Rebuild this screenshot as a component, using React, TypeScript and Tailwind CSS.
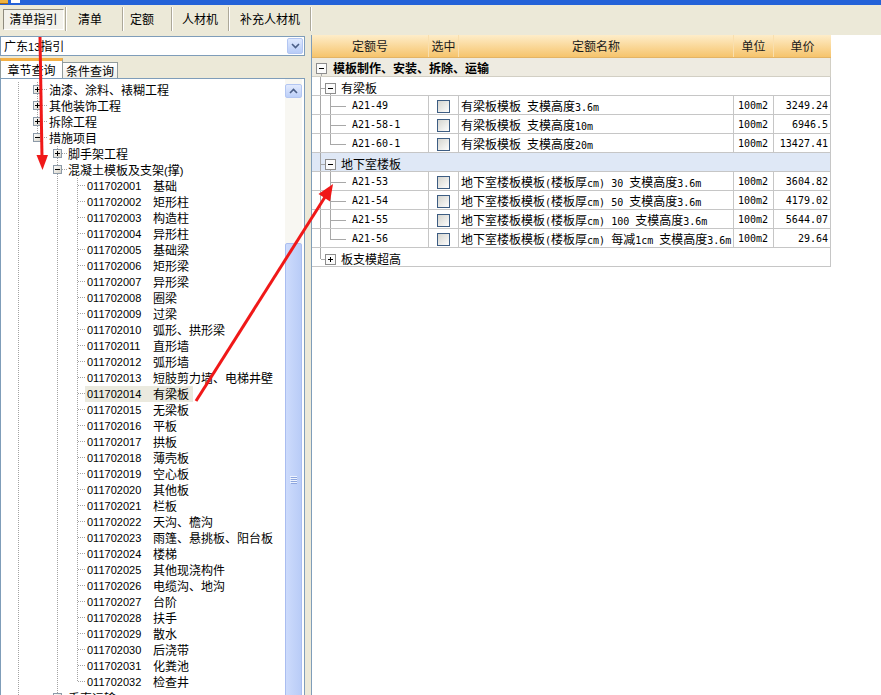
import React from "react";

const LAT_TREE = "font-['Liberation_Sans',sans-serif] text-[11px]";
const LAT_GRID = "font-['DejaVu_Sans_Mono',monospace] text-[10px]";

function Mixed({ text, latin }: { text: string; latin: string }) {
  const parts = text.match(/[\x00-\x7f]+|[^\x00-\x7f]+/g) ?? [];
  return (
    <>
      {parts.map((p, i) =>
        /^[\x00-\x7f]+$/.test(p) ? (
          <span key={i} className={latin}>
            {p}
          </span>
        ) : (
          <span key={i}>{p}</span>
        )
      )}
    </>
  );
}

const DOT = "#a3a3a3";

function VDot({ x, half }: { x: number; half?: boolean }) {
  return <line x1={x + 0.5} x2={x + 0.5} y1={0} y2={half ? 8 : 16} stroke={DOT} strokeDasharray="1 1" />;
}
function HDot({ x1, x2 }: { x1: number; x2: number }) {
  return <line x1={x1} x2={x2} y1={7.5} y2={7.5} stroke={DOT} strokeDasharray="1 1" />;
}
function TreeBox({ cx, open }: { cx: number; open: boolean }) {
  return (
    <g>
      <rect x={cx - 3.5} y={3.5} width={8} height={8} fill="url(#tbg)" stroke="#8c9aa8" />
      <line x1={cx - 2} x2={cx + 3} y1={7.5} y2={7.5} stroke="#000" />
      {!open && <line x1={cx + 0.5} x2={cx + 0.5} y1={5} y2={10} stroke="#000" />}
    </g>
  );
}

type TRow = {
  lvl: 1 | 2 | 3;
  text: string;
  code?: string;
  box?: "open" | "closed";
  last?: boolean;
  sel?: boolean;
};

const l3: [string, string][] = [
  ["011702001", "基础"],
  ["011702002", "矩形柱"],
  ["011702003", "构造柱"],
  ["011702004", "异形柱"],
  ["011702005", "基础梁"],
  ["011702006", "矩形梁"],
  ["011702007", "异形梁"],
  ["011702008", "圈梁"],
  ["011702009", "过梁"],
  ["011702010", "弧形、拱形梁"],
  ["011702011", "直形墙"],
  ["011702012", "弧形墙"],
  ["011702013", "短肢剪力墙、电梯井壁"],
  ["011702014", "有梁板"],
  ["011702015", "无梁板"],
  ["011702016", "平板"],
  ["011702017", "拱板"],
  ["011702018", "薄壳板"],
  ["011702019", "空心板"],
  ["011702020", "其他板"],
  ["011702021", "栏板"],
  ["011702022", "天沟、檐沟"],
  ["011702023", "雨篷、悬挑板、阳台板"],
  ["011702024", "楼梯"],
  ["011702025", "其他现浇构件"],
  ["011702026", "电缆沟、地沟"],
  ["011702027", "台阶"],
  ["011702028", "扶手"],
  ["011702029", "散水"],
  ["011702030", "后浇带"],
  ["011702031", "化粪池"],
  ["011702032", "检查井"],
];

const treeRows: TRow[] = [
  { lvl: 1, box: "closed", text: "油漆、涂料、裱糊工程" },
  { lvl: 1, box: "closed", text: "其他装饰工程" },
  { lvl: 1, box: "closed", text: "拆除工程" },
  { lvl: 1, box: "open", text: "措施项目", last: true },
  { lvl: 2, box: "closed", text: "脚手架工程" },
  { lvl: 2, box: "open", text: "混凝土模板及支架(撑)" },
  ...l3.map(([c, t], i) => ({
    lvl: 3 as const,
    code: c,
    text: t,
    last: i === l3.length - 1,
    sel: c === "011702014",
  })),
  { lvl: 2, box: "closed", text: "垂直运输" },
];

function TreeRow({ r }: { r: TRow }) {
  const w = r.lvl === 1 ? 48 : r.lvl === 2 ? 67 : 84;
  return (
    <div className="flex h-[16px] items-start whitespace-pre">
      <svg width={w} height={16} viewBox={`1 0 ${w} 16`} className="shrink-0">
        <defs>
          <linearGradient id="tbg" x1="0" y1="0" x2="1" y2="1">
            <stop offset="0" stopColor="#ffffff" />
            <stop offset="1" stopColor="#d4d0c4" />
          </linearGradient>
        </defs>
        <VDot x={18} />
        {r.lvl === 1 && <VDot x={37} half={r.last} />}
        {r.lvl === 1 && <HDot x1={42} x2={48} />}
        {r.lvl >= 2 && <VDot x={57} />}
        {r.lvl === 2 && <HDot x1={62} x2={67} />}
        {r.lvl === 3 && <VDot x={77} half={r.last} />}
        {r.lvl === 3 && <HDot x1={78} x2={85} />}
        {r.box && <TreeBox cx={r.lvl === 1 ? 37 : 57} open={r.box === "open"} />}
      </svg>
      {r.lvl === 3 ? (
        <span className={`flex h-[16px] items-start pl-[2px] pr-[4px] ${r.sel ? "bg-[#ebeadf]" : ""}`}>
          <span className={`w-[66px] ${LAT_TREE}`}>{r.code}</span>
          <Mixed text={r.text} latin={LAT_TREE} />
        </span>
      ) : (
        <span>
          <Mixed text={r.text} latin={LAT_TREE} />
        </span>
      )}
    </div>
  );
}

const GL = "#a8a8a8";

function GBox({ cx, cy, open }: { cx: number; cy: number; open: boolean }) {
  return (
    <g>
      <rect x={cx - 4.5} y={cy - 4.5} width={10} height={10} fill="#fbfbfb" stroke="#8d8d8d" />
      <line x1={cx - 2} x2={cx + 3} y1={cy + 0.5} y2={cy + 0.5} stroke="#000" />
      {!open && <line x1={cx + 0.5} x2={cx + 0.5} y1={cy - 2} y2={cy + 3} stroke="#000" />}
    </g>
  );
}

function CheckBox() {
  return (
    <div className="h-[13px] w-[13px] border border-[#3d5d83] bg-[linear-gradient(135deg,#d5d5cf,#fdfdfd)]" />
  );
}

type DRow = { code: string; name: string; unit: string; price: string; last?: boolean };

const g1: DRow[] = [
  { code: "A21-49", name: "有梁板模板 支模高度3.6m", unit: "100m2", price: "3249.24" },
  { code: "A21-58-1", name: "有梁板模板 支模高度10m", unit: "100m2", price: "6946.5" },
  { code: "A21-60-1", name: "有梁板模板 支模高度20m", unit: "100m2", price: "13427.41", last: true },
];
const g2: DRow[] = [
  { code: "A21-53", name: "地下室楼板模板(楼板厚cm) 30 支模高度3.6m", unit: "100m2", price: "3604.82" },
  { code: "A21-54", name: "地下室楼板模板(楼板厚cm) 50 支模高度3.6m", unit: "100m2", price: "4179.02" },
  { code: "A21-55", name: "地下室楼板模板(楼板厚cm) 100 支模高度3.6m", unit: "100m2", price: "5644.07" },
  { code: "A21-56", name: "地下室楼板模板(楼板厚cm) 每减1cm 支模高度3.6m", unit: "100m2", price: "29.64", last: true },
];

function DataRow({ d }: { d: DRow }) {
  return (
    <div className="flex h-[19px] border-r border-b border-[#c6c6c6] bg-white whitespace-pre">
      <div className="flex w-[117px] items-start border-r border-[#c6c6c6]">
        <svg width={38} height={18} viewBox="312 0 38 18" className="shrink-0">
          <line x1={320.5} x2={320.5} y1={0} y2={18} stroke={GL} />
          <line x1={330.5} x2={330.5} y1={0} y2={d.last ? 11 : 18} stroke={GL} />
          <line x1={331} x2={346} y1={10.5} y2={10.5} stroke={GL} />
        </svg>
        <span className={`pl-[2px] pt-[3px] leading-[14px] ${LAT_GRID}`}>{d.code}</span>
      </div>
      <div className="flex w-[30px] justify-center border-r border-[#c6c6c6] pt-[4px]">
        <CheckBox />
      </div>
      <div className="w-[275px] border-r border-[#c6c6c6] pl-[2px] pt-[2px]">
        <Mixed text={d.name} latin={LAT_GRID} />
      </div>
      <div className={`w-[40px] border-r border-[#c6c6c6] pl-[4px] pt-[3px] leading-[14px] ${LAT_GRID}`}>{d.unit}</div>
      <div className={`w-[56px] pr-[2px] pt-[3px] text-right leading-[14px] ${LAT_GRID}`}>{d.price}</div>
    </div>
  );
}

function GroupRow({ text, open, last, bg }: { text: string; open: boolean; last?: boolean; bg: string }) {
  return (
    <div className={`flex h-[19px] items-start border-r border-b border-[#c6c6c6] whitespace-pre ${bg}`}>
      <svg width={29} height={18} viewBox="312 0 29 18" className="shrink-0">
        <line x1={320.5} x2={320.5} y1={0} y2={last ? 11 : 18} stroke={GL} />
        <line x1={321} x2={326} y1={11.5} y2={11.5} stroke={GL} />
        {open && <line x1={330.5} x2={330.5} y1={16} y2={18} stroke={GL} />}
        <GBox cx={330} cy={11} open={open} />
      </svg>
      <span className="pt-[3px]">{text}</span>
    </div>
  );
}

export default function App() {
  return (
    <div className="relative h-[695px] w-[881px] overflow-hidden bg-[#ece9d8] font-['Noto_Sans_CJK_SC',sans-serif] text-[12px] leading-[16px] text-black">
      {/* title strip */}
      <div className="flex h-[5px] items-start bg-[#2462d8]">
        <svg width="24" height="5" viewBox="0 0 24 5">
          <rect x="0" y="0" width="8" height="4" fill="#f0b23c" />
          <rect x="0" y="3" width="8" height="1" fill="#a36a12" />
          <rect x="11" y="0" width="9" height="3" fill="#ffffff" />
        </svg>
      </div>

      {/* toolbar */}
      <div className="flex h-[28px] items-center">
        <div className="w-[3px]" />
        <div className="flex h-[21px] w-[61px] items-center justify-center border-t border-l border-t-[#8e8b7e] border-l-[#8e8b7e] border-r border-b border-r-white border-b-white bg-[#f3f2ec]">
          清单指引
        </div>
        <div className="w-[1px]" />
        <div className="h-[24px] w-[2px] border-l border-r border-l-[#aca899] border-r-white" />
        <div className="w-[55px] pl-[11px]">清单</div>
        <div className="h-[24px] w-[2px] border-l border-r border-l-[#aca899] border-r-white" />
        <div className="w-[47px] pl-[6px]">定额</div>
        <div className="h-[24px] w-[2px] border-l border-r border-l-[#aca899] border-r-white" />
        <div className="w-[55px] pl-[9px]">人材机</div>
        <div className="h-[24px] w-[2px] border-l border-r border-l-[#aca899] border-r-white" />
        <div className="w-[80px] pl-[10px]">补充人材机</div>
        <div className="h-[24px] w-[2px] border-l border-r border-l-[#aca899] border-r-white" />
      </div>

      {/* body */}
      <div className="flex">
        {/* left column */}
        <div className="flex w-[305px] shrink-0 flex-col">
          <div className="mt-[3px] flex h-[20px] items-center border border-[#7f9db9] bg-white pl-[3px]">
            <span>
              <Mixed text="广东13指引" latin={LAT_TREE} />
            </span>
            <div className="ml-auto mr-[1px] flex h-[16px] w-[16px] items-center justify-center rounded-[2px] border border-[#b3c6f2] bg-[linear-gradient(to_bottom,#dfe9fe,#b8ccf7)]">
              <svg width="9" height="6" viewBox="0 0 9 6">
                <polyline points="1,1 4.5,4.5 8,1" fill="none" stroke="#4b5f87" strokeWidth="1.6" />
              </svg>
            </div>
          </div>

          <div className="mt-[2px] flex h-[20px] items-end">
            <div className="flex h-[20px] w-[63px] items-center justify-center border-x border-[#919b9c] border-t-[3px] border-t-[#f4b045] bg-white">
              章节查询
            </div>
            <div className="flex h-[16px] w-[55px] items-center justify-center border-t border-r border-[#919b9c] bg-[linear-gradient(to_bottom,#ffffff,#f1f0ea)]">
              条件查询
            </div>
          </div>

          <div className="flex h-[640px] w-[305px] shrink-0 border border-[#7f9db9] bg-white pr-[2px]">
            <div className="w-[284px] shrink-0 pt-[3px]">
              {treeRows.map((r, i) => (
                <TreeRow key={i} r={r} />
              ))}
            </div>
            <div className="flex w-[17px] shrink-0 flex-col bg-[#f8f7f2]">
              <div className="mt-[5px] flex h-[16px] w-[17px] items-center justify-center rounded-[2px] border border-[#b3c6f2] bg-[linear-gradient(to_bottom,#e2eafe,#bccff8)]">
                <svg width="9" height="6" viewBox="0 0 9 6">
                  <polyline points="1,5 4.5,1.5 8,5" fill="none" stroke="#4b5f87" strokeWidth="1.6" />
                </svg>
              </div>
              <div className="h-[162px]" />
              <div className="flex h-[532px] w-[17px] items-center justify-center rounded-[2px] border border-[#aabdf0] bg-[linear-gradient(to_right,#cddbfc,#b9ccf7)]">
                <svg width="7" height="8" viewBox="0 0 7 8">
                  <line x1="0" x2="7" y1="0.5" y2="0.5" stroke="#eef3fe" />
                  <line x1="0" x2="7" y1="2.5" y2="2.5" stroke="#eef3fe" />
                  <line x1="0" x2="7" y1="4.5" y2="4.5" stroke="#eef3fe" />
                  <line x1="0" x2="7" y1="6.5" y2="6.5" stroke="#eef3fe" />
                  <line x1="1" x2="8" y1="1.5" y2="1.5" stroke="#8ea6de" />
                  <line x1="1" x2="8" y1="3.5" y2="3.5" stroke="#8ea6de" />
                  <line x1="1" x2="8" y1="5.5" y2="5.5" stroke="#8ea6de" />
                  <line x1="1" x2="8" y1="7.5" y2="7.5" stroke="#8ea6de" />
                </svg>
              </div>
            </div>
          </div>
        </div>

        {/* splitter */}
        <div className="w-[6px] shrink-0" />

        {/* right panel */}
        <div className="mt-[2px] h-[660px] flex-1 border-l border-[#7f9db9] bg-white">
          <div className="w-[519px]">
            {/* header */}
            <div className="flex h-[23px] border-b border-[#e3b465] bg-[linear-gradient(to_bottom,#feedc9,#f6c46c)] text-[#1a1a1a]">
              <div className="flex w-[117px] items-center justify-center border-r border-[#f9dfae]">定额号</div>
              <div className="flex w-[30px] items-center justify-center border-r border-[#f9dfae]">选中</div>
              <div className="flex w-[275px] items-center justify-center border-r border-[#f9dfae]">定额名称</div>
              <div className="flex w-[40px] items-center justify-center border-r border-[#f9dfae]">单位</div>
              <div className="flex w-[57px] items-center justify-center">单价</div>
            </div>

            {/* top group */}
            <div className="flex h-[19px] items-start border-r border-b border-[#d2cfc4] bg-[#eeebe1] whitespace-pre">
              <svg width={21} height={18} viewBox="312 0 21 18" className="shrink-0">
                <line x1={321.5} x2={321.5} y1={15} y2={18} stroke={GL} />
                <GBox cx={321} cy={10} open={true} />
              </svg>
              <span className="pt-[2px] font-bold">模板制作、安装、拆除、运输</span>
            </div>

            <GroupRow text="有梁板" open={true} bg="bg-white" />
            {g1.map((d) => (
              <DataRow key={d.code} d={d} />
            ))}
            <GroupRow text="地下室楼板" open={true} bg="bg-[#dfe8f6]" />
            {g2.map((d) => (
              <DataRow key={d.code} d={d} />
            ))}
            <GroupRow text="板支模超高" open={false} last={true} bg="bg-white" />
          </div>
        </div>
      </div>

      {/* red annotation arrows */}
      <svg className="pointer-events-none absolute left-0 top-0" width="881" height="695" viewBox="0 0 881 695">
        <line x1="40" y1="37" x2="42" y2="158" stroke="#f01818" strokeWidth="3" />
        <polygon points="36.5,155 48,155 42.5,170" fill="#f01818" />
        <line x1="196" y1="401" x2="325" y2="197" stroke="#f01818" strokeWidth="3" />
        <polygon points="333,184 330,201.5 318.5,194" fill="#f01818" />
      </svg>
    </div>
  );
}
